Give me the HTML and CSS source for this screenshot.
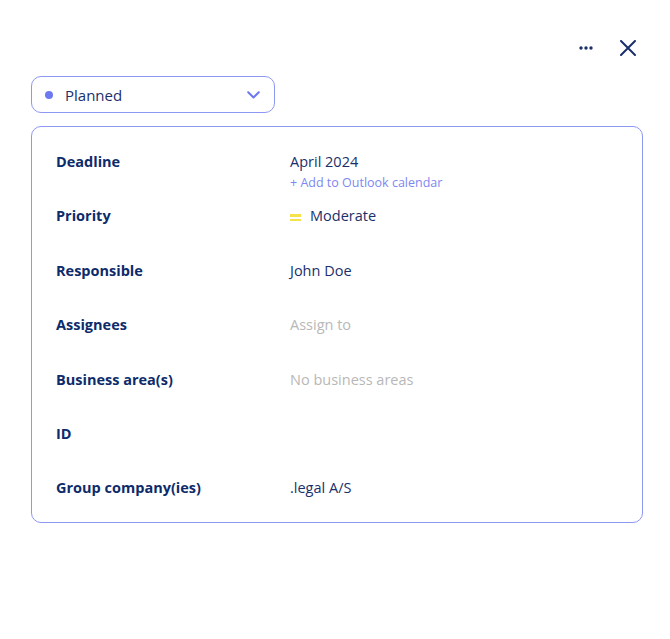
FILE: index.html
```html
<!DOCTYPE html>
<html lang="en">
<head>
    <meta charset="UTF-8">
    <meta name="viewport" content="width=device-width, initial-scale=1.0">
    <title>Task details</title>
    <link rel="stylesheet" href="styles.css">
</head>
<body>
    <div class="panel">
        <div class="toolbar">
            <button class="icon-btn" title="More">
                <svg width="14" height="4" viewBox="0 0 14 4"><circle cx="2" cy="2" r="1.7" fill="#1a2f6b"/><circle cx="7" cy="2" r="1.7" fill="#1a2f6b"/><circle cx="12" cy="2" r="1.7" fill="#1a2f6b"/></svg>
            </button>
            <button class="icon-btn" title="Close">
                <svg width="16" height="16" viewBox="0 0 16 16"><path d="M1 1 L15 15 M15 1 L1 15" stroke="#1a2f6b" stroke-width="2" stroke-linecap="round"/></svg>
            </button>
        </div>

        <div class="status-select">
            <span class="status-dot"></span>
            <span class="status-label">Planned</span>
            <svg class="chevron" width="13" height="8" viewBox="0 0 13 8"><path d="M1.2 1.2 L6.5 6.5 L11.8 1.2" fill="none" stroke="#6d79f0" stroke-width="2" stroke-linecap="round" stroke-linejoin="round"/></svg>
        </div>

        <div class="details-card">
            <div class="row">
                <div class="label">Deadline</div>
                <div class="value">
                    <div>April 2024</div>
                    <a class="link" href="#">+ Add to Outlook calendar</a>
                </div>
            </div>
            <div class="row">
                <div class="label">Priority</div>
                <div class="value priority">
                    <span class="priority-icon"><i></i><i></i></span>
                    Moderate
                </div>
            </div>
            <div class="row">
                <div class="label">Responsible</div>
                <div class="value">John Doe</div>
            </div>
            <div class="row">
                <div class="label">Assignees</div>
                <div class="value muted">Assign to</div>
            </div>
            <div class="row">
                <div class="label">Business area(s)</div>
                <div class="value muted">No business areas</div>
            </div>
            <div class="row">
                <div class="label">ID</div>
                <div class="value"></div>
            </div>
            <div class="row">
                <div class="label">Group company(ies)</div>
                <div class="value">.legal A/S</div>
            </div>
        </div>
    </div>
</body>
</html>
```

FILE: styles.css
```css
body {
    margin: 0;
    background: #ffffff;
    font-family: "Open Sans", Arial, sans-serif;
    color: #1a2f6b;
}
.panel {
    padding: 32px 27px 0 31px;
}
.toolbar {
    display: flex;
    justify-content: flex-end;
    align-items: center;
    gap: 27px;
    height: 32px;
    padding-right: 7px;
}
.icon-btn {
    background: none;
    border: none;
    padding: 0;
    display: flex;
    align-items: center;
    justify-content: center;
    cursor: pointer;
}
.status-select {
    margin-top: 12px;
    width: 244px;
    height: 37px;
    box-sizing: border-box;
    border: 1.5px solid #8d97f4;
    border-radius: 10px;
    display: flex;
    align-items: center;
    padding: 0 14px 0 13px;
}
.status-dot {
    width: 8px;
    height: 8px;
    border-radius: 50%;
    background: #6d79f0;
    margin-right: 12px;
}
.status-label {
    flex: 1;
    font-size: 15px;
    color: #1a2f6b;
}
.details-card {
    margin-top: 13px;
    width: 612px;
    box-sizing: border-box;
    border: 1.5px solid #8d97f4;
    border-radius: 10px;
    padding: 25px 24px 24px 24px;
}
.row {
    display: flex;
    height: 54.4px;
}
.row:last-child {
    height: auto;
}
.label {
    width: 234px;
    font-weight: 700;
    font-size: 14.5px;
    line-height: 20px;
    color: #0d2b6a;
}
.value {
    font-size: 14.5px;
    line-height: 20px;
    color: #1a2f6b;
}
.value.muted {
    color: #b8b8b8;
}
.link {
    display: block;
    margin-top: 2px;
    font-size: 12.5px;
    line-height: 18px;
    color: #7d88f1;
    text-decoration: none;
}
.priority {
    display: flex;
    align-items: flex-start;
    height: 20px;
}
.priority-icon {
    display: flex;
    flex-direction: column;
    gap: 2px;
    margin: 8px 9px 0 0;
}
.priority-icon i {
    display: block;
    width: 11px;
    height: 2.5px;
    background: #f6e24a;
}
```
